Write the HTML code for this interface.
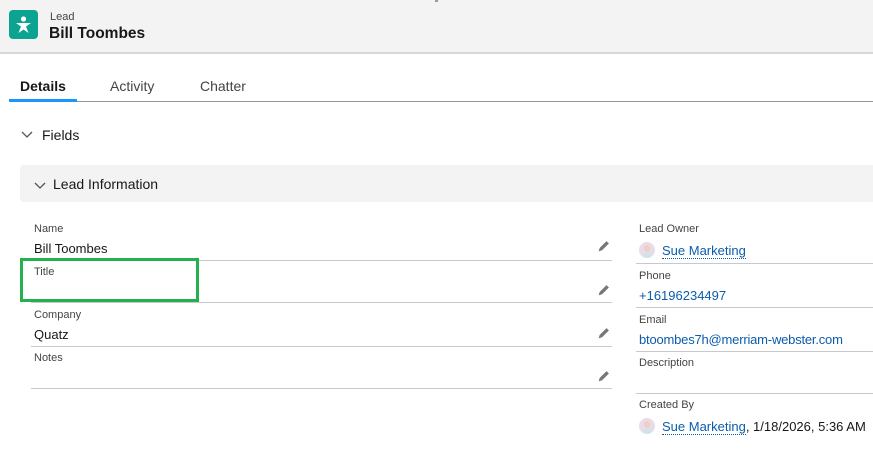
<!DOCTYPE html>
<html><head><style>
*{margin:0;padding:0;box-sizing:border-box}
body{width:873px;height:461px;overflow:hidden;background:#fff;font-family:"Liberation Sans",sans-serif;color:#181818;position:relative}
.a{position:absolute;white-space:nowrap}
.lbl{font-size:11px;color:#444}
.val{font-size:13px;color:#181818}
.lnk{font-size:13px;color:#0b5cab}
.ln{position:absolute;height:1px;background:#c9c9c9}
.pen{position:absolute;width:13px;height:13px}
.av{position:absolute;width:16px;height:16px;border-radius:50%;background:#e9dbe8;overflow:hidden}
.av:after{content:"";position:absolute;left:5px;top:3px;width:6px;height:7px;border-radius:50%;background:#f1cfc0}
.av:before{content:"";position:absolute;left:3px;top:11px;width:10px;height:6px;border-radius:50% 50% 0 0;background:#cfe3ef}
.u{border-bottom:1px dotted #0b5cab}
</style></head><body>
<div class="a" style="left:0;top:0;width:873px;height:54px;background:#f3f3f3;border-bottom:2px solid #d8d8d8"></div>
<div class="a" style="left:435px;top:0;width:3px;height:2px;background:#999"></div>
<div class="a" style="left:9px;top:10px;width:29px;height:29px;border-radius:4px;background:#0ca391"></div>
<svg class="a" style="left:9px;top:10px" width="29" height="29" viewBox="0 0 29 29"><circle cx="14.5" cy="9" r="2.6" fill="#fff"/><path d="M7 13h15l-5 3.5 2.5 6.5-5-3.5-5 3.5 2.5-6.5z" fill="#fff"/></svg>
<div class="a" style="left:50px;top:11px;font-size:11px;color:#444">Lead</div>
<div class="a" style="left:49px;top:25px;font-size:15.5px;font-weight:bold">Bill Toombes</div>

<div class="a" style="left:20px;top:78px;font-size:14px;font-weight:bold">Details</div>
<div class="a" style="left:110px;top:78px;font-size:14px;color:#444">Activity</div>
<div class="a" style="left:200px;top:78px;font-size:14px;color:#444">Chatter</div>
<div class="ln" style="left:10px;top:101px;width:863px;background:#999"></div>
<div class="a" style="left:9px;top:99px;width:68px;height:3px;background:#1b96ff"></div>

<svg class="a" style="left:21px;top:131px" width="12" height="8"><path d="M1 1l5 5 5-5" fill="none" stroke="#555" stroke-width="1.3"/></svg>
<div class="a" style="left:42px;top:127px;font-size:14px">Fields</div>

<div class="a" style="left:20px;top:165px;width:860px;height:37px;background:#f3f3f3;border-radius:4px"></div>
<svg class="a" style="left:34px;top:182px" width="12" height="8"><path d="M1 1l5 5 5-5" fill="none" stroke="#555" stroke-width="1.3"/></svg>
<div class="a" style="left:53px;top:176px;font-size:14px">Lead Information</div>

<div class="a lbl" style="left:34px;top:223px">Name</div>
<div class="a val" style="left:34px;top:241px">Bill Toombes</div>
<div class="ln" style="left:31px;top:260px;width:581px"></div>
<div class="a lbl" style="left:34px;top:266px">Title</div>
<div class="ln" style="left:31px;top:302px;width:581px"></div>
<div class="a lbl" style="left:34px;top:309px">Company</div>
<div class="a val" style="left:34px;top:327px">Quatz</div>
<div class="ln" style="left:31px;top:346px;width:581px"></div>
<div class="a lbl" style="left:34px;top:352px">Notes</div>
<div class="ln" style="left:31px;top:388px;width:581px"></div>
<div class="a" style="left:20px;top:258px;width:179px;height:44px;border:3px solid #22b14c"></div>

<svg class="pen" style="left:597px;top:240px" viewBox="0 0 12 12"><path d="M1.5 10.5l1-3.2 6.3-6.3 2.2 2.2-6.3 6.3z" fill="#777"/></svg>
<svg class="pen" style="left:597px;top:284px" viewBox="0 0 12 12"><path d="M1.5 10.5l1-3.2 6.3-6.3 2.2 2.2-6.3 6.3z" fill="#777"/></svg>
<svg class="pen" style="left:597px;top:327px" viewBox="0 0 12 12"><path d="M1.5 10.5l1-3.2 6.3-6.3 2.2 2.2-6.3 6.3z" fill="#777"/></svg>
<svg class="pen" style="left:597px;top:370px" viewBox="0 0 12 12"><path d="M1.5 10.5l1-3.2 6.3-6.3 2.2 2.2-6.3 6.3z" fill="#777"/></svg>

<div class="a lbl" style="left:639px;top:223px">Lead Owner</div>
<div class="av" style="left:639px;top:242px"></div>
<div class="a lnk" style="left:662px;top:243px"><span class="u">Sue Marketing</span></div>
<div class="ln" style="left:636px;top:263px;width:237px"></div>
<div class="a lbl" style="left:639px;top:270px">Phone</div>
<div class="a lnk" style="left:639px;top:288px">+16196234497</div>
<div class="ln" style="left:636px;top:307px;width:237px"></div>
<div class="a lbl" style="left:639px;top:314px">Email</div>
<div class="a lnk" style="left:639px;top:332px;letter-spacing:-0.2px">btoombes7h@merriam-webster.com</div>
<div class="ln" style="left:636px;top:351px;width:237px"></div>
<div class="a lbl" style="left:639px;top:357px">Description</div>
<div class="ln" style="left:636px;top:393px;width:237px"></div>
<div class="a lbl" style="left:639px;top:399px">Created By</div>
<div class="av" style="left:639px;top:418px"></div>
<div class="a lnk" style="left:662px;top:419px"><span class="u">Sue Marketing</span><span style="color:#181818">, 1/18/2026, 5:36 AM</span></div>
</body></html>
